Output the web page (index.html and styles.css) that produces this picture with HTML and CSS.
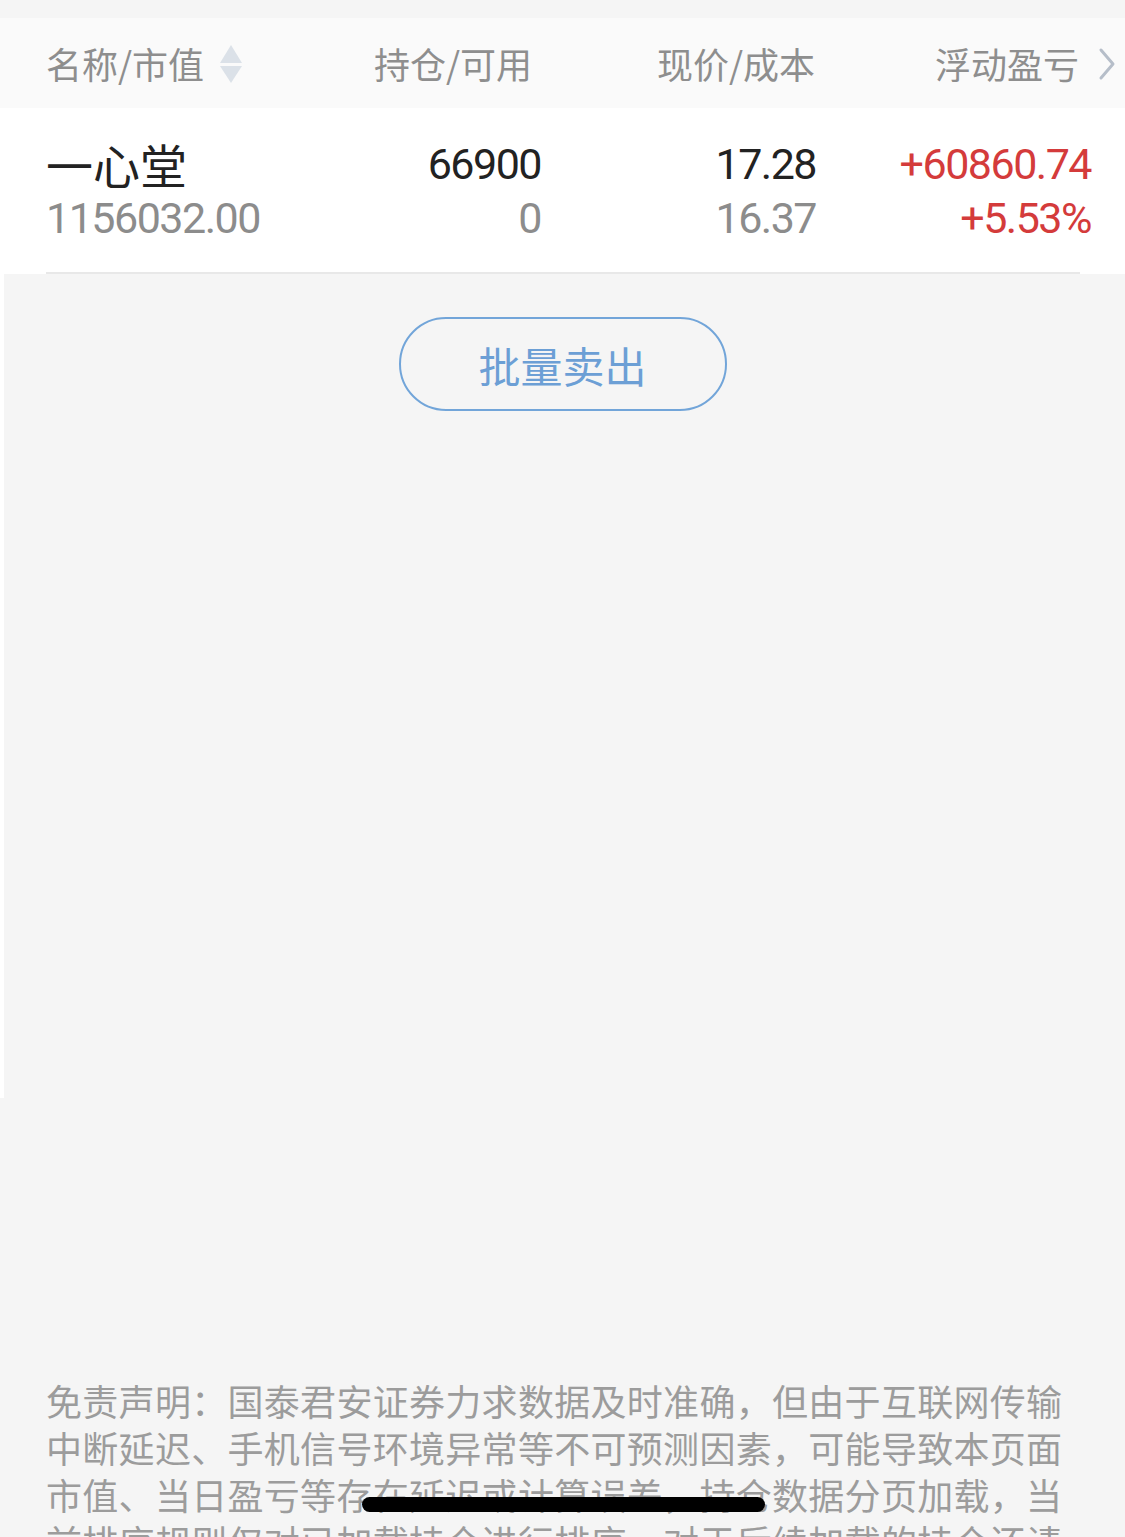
FILE: index.html
```html
<!DOCTYPE html>
<html lang="zh-CN">
<head>
    <meta charset="UTF-8">
    <meta name="viewport" content="width=device-width, initial-scale=1.0">
    <title>持仓</title>
    <link rel="stylesheet" href="styles.css">
</head>
<body>
    <div class="top-gap"></div>

    <div class="table-head">
        <div class="head-cell head-name">
            名称/市值
            <svg class="sort-icon" width="24" height="40" viewBox="0 0 24 40">
                <path d="M12 1 L23 19 L1 19 Z" fill="#dbe1e8"/>
                <path d="M1 22 L23 22 L12 39 Z" fill="#dbe1e8"/>
            </svg>
        </div>
        <div class="head-cell head-qty">持仓/可用</div>
        <div class="head-cell head-price">现价/成本</div>
        <div class="head-cell head-profit">
            浮动盈亏
            <svg class="chevron" width="18" height="34" viewBox="0 0 18 34">
                <polyline points="3,3 15,17 3,31" fill="none" stroke="#b6bec9" stroke-width="3" stroke-linecap="round" stroke-linejoin="round"/>
            </svg>
        </div>
    </div>

    <div class="stock-row">
        <div class="row-inner">
            <div class="cell cell-name">
                <div class="stock-name">一心堂</div>
                <div class="num sub">1156032.00</div>
            </div>
            <div class="cell cell-right">
                <div class="num main">66900</div>
                <div class="num sub">0</div>
            </div>
            <div class="cell cell-right">
                <div class="num main">17.28</div>
                <div class="num sub">16.37</div>
            </div>
            <div class="cell cell-right">
                <div class="num up">+60860.74</div>
                <div class="num up">+5.53%</div>
            </div>
        </div>
    </div>

    <div class="list-area">
        <button class="batch-btn">批量卖出</button>
    </div>

    <p class="disclaimer">免责声明：国泰君安证券力求数据及时准确，但由于互联网传输中断延迟、手机信号环境异常等不可预测因素，可能导致本页面市值、当日盈亏等存在延迟或计算误差，持仓数据分页加载，当前排序规则仅对已加载持仓进行排序，对于后续加载的持仓还请以实际为准。</p>

    <div class="home-bar"></div>
</body>
</html>
```

FILE: styles.css
```css
body {
    margin: 0;
    height: 1537px;
    overflow: hidden;
    background-color: #f5f5f5;
    font-family: "Noto Sans CJK SC", "Noto Sans", sans-serif;
}

.top-gap {
    height: 18px;
}

.table-head {
    height: 90px;
    background-color: #fafafa;
    display: grid;
    grid-template-columns: 254px 232px 283px 301px;
    padding-left: 46px;
    align-items: center;
}

.head-cell {
    font-size: 36px;
    color: #8e8e8e;
    display: flex;
    align-items: center;
}

.head-qty,
.head-price,
.head-profit {
    justify-content: flex-end;
}

.sort-icon {
    margin-left: 15px;
    margin-top: 2px;
}

.chevron {
    margin-left: 19px;
    margin-top: 2px;
}

.stock-row {
    background-color: #fff;
    height: 166px;
}

.row-inner {
    display: grid;
    grid-template-columns: 254px 241px 275px 275px;
    margin: 0 45px 0 46px;
    padding-top: 27px;
    height: 137px;
    border-bottom: 2px solid #e8e8e8;
}

.cell {
    display: flex;
    flex-direction: column;
}

.cell-right {
    align-items: flex-end;
}

.stock-name {
    font-size: 47px;
    line-height: 58px;
    margin-bottom: -2px;
    color: #222;
}

.num {
    font-family: Roboto, "DejaVu Sans Condensed", sans-serif;
    font-size: 43px;
    line-height: 54px;
    letter-spacing: -1.5px;
}

.cell-right .num:first-child {
    margin-top: 2px;
}

.main {
    color: #222;
}

.sub {
    color: #8c8c8c;
}

.up {
    color: #d43b3b;
}

.list-area {
    height: 781px;
    padding-top: 43px;
    border-left: 4px solid #fff;
    display: flex;
    justify-content: center;
    align-items: flex-start;
    padding-right: 4px;
}

.batch-btn {
    width: 328px;
    height: 94px;
    border: 2px solid #72a5d9;
    border-radius: 47px;
    background-color: transparent;
    color: #6c9fd5;
    font-family: "Noto Sans CJK SC", sans-serif;
    font-size: 42px;
    padding: 0;
}

.disclaimer {
    margin: 279px 0 0 0;
    padding: 0 46px;
    width: 1020px;
    font-size: 36px;
    line-height: 47px;
    letter-spacing: 0.3px;
    color: #9c9c9c;
}

.home-bar {
    position: fixed;
    left: 362px;
    top: 1497px;
    width: 403px;
    height: 15px;
    border-radius: 8px;
    background-color: #000;
}
```
